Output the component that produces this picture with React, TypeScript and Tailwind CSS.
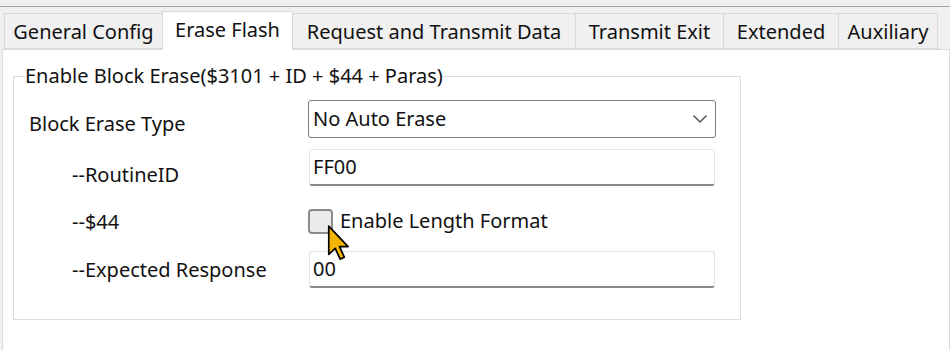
const tabs = [
  { label: "General Config", w: "w-[159px]" },
  { label: "Erase Flash", w: "w-[131px]", active: true },
  { label: "Request and Transmit Data", w: "w-[284px]" },
  { label: "Transmit Exit", w: "w-[149px]" },
  { label: "Extended", w: "w-[116px]" },
  { label: "Auxiliary", w: "w-[100px]" },
];

const Field = ({ value }: { value: string }) => (
  <div className="w-[406px] h-[37px] bg-white border border-[#e3e3e3] border-b-[#8a8a8a] border-b-2 rounded-[3px] flex items-center pl-[3px]">
    {value}
  </div>
);

export default function App() {
  return (
    <div
      className="relative w-[950px] h-[350px] overflow-hidden bg-[#f0f0f0] text-[#111] text-[20px] leading-[30px]"
      style={{ fontFamily: '"Segoe UI", "Noto Sans", sans-serif' }}
    >
      <div className="h-[7px] border-b border-[#a5a5a5]" />
      <div className="flex items-end pl-[4px] h-[42px]">
        {tabs.map((t) =>
          t.active ? (
            <div
              key={t.label}
              className={`${t.w} h-[39px] -ml-px bg-white border border-b-0 border-[#d9d9d9] flex justify-center pt-[3px] relative top-[1px] z-10`}
            >
              {t.label}
            </div>
          ) : (
            <div
              key={t.label}
              className={`${t.w} h-[36px] bg-[#f0f0f0] border border-[#d9d9d9] -ml-px first:ml-0 flex items-center justify-center pt-[2px]`}
            >
              {t.label}
            </div>
          )
        )}
      </div>
      <div className="ml-[2px] h-[320px] bg-white border border-[#d9d9d9] pt-[14px] pl-[10px]">
        <fieldset className="w-[728px] h-[256px] border border-[#dcdcdc] pl-[12px]">
          <legend className="ml-[-1px] leading-[24px]">
            Enable Block Erase($3101 + ID + $44 + Paras)
          </legend>
          <div className="flex flex-col mt-[12px]">
            <div className="flex h-[38px]">
              <div className="w-[282px] pt-[9px] pl-[3px]">Block Erase Type</div>
              <div className="w-[408px] h-[38px] border border-[#7a7a7a] rounded-[3px] bg-white flex items-center justify-between pl-[4px] pr-[7px]">
                <span>No Auto Erase</span>
                <svg width="16" height="10" viewBox="0 0 16 10" fill="none">
                  <path d="M1.5 1.5 L8 8 L14.5 1.5" stroke="#555" strokeWidth="1.5" />
                </svg>
              </div>
            </div>
            <div className="flex h-[37px] mt-[11px]">
              <div className="w-[283px] pt-[11px] pl-[46px]">--RoutineID</div>
              <Field value="FF00" />
            </div>
            <div className="flex h-[37px] mt-[17px]">
              <div className="w-[282px] pt-[4px] pl-[46px]">--$44</div>
              <div className="flex items-center gap-[7px] h-[37px]">
                <div className="w-[25px] h-[25px] rounded-[4px] border-2 border-[#8c8c8c] bg-[#ebebeb]" />
                <span className="-mt-[1px]">Enable Length Format</span>
              </div>
            </div>
            <div className="flex h-[37px] mt-[11px]">
              <div className="w-[283px] pt-[4px] pl-[46px]">--Expected Response</div>
              <Field value="00" />
            </div>
          </div>
        </fieldset>
      </div>
      <svg
        className="absolute left-[326px] top-[225px]"
        width="26"
        height="36"
        viewBox="0 0 12 19"
      >
        <path
          d="M0.6 0.6 L0.6 15.5 L4 12.3 L6.6 18 L8.8 17 L6.3 11.4 L10.8 11.4 Z"
          fill="#f5b400"
          stroke="#000"
          strokeWidth="0.9"
          strokeLinejoin="round"
        />
      </svg>
    </div>
  );
}
